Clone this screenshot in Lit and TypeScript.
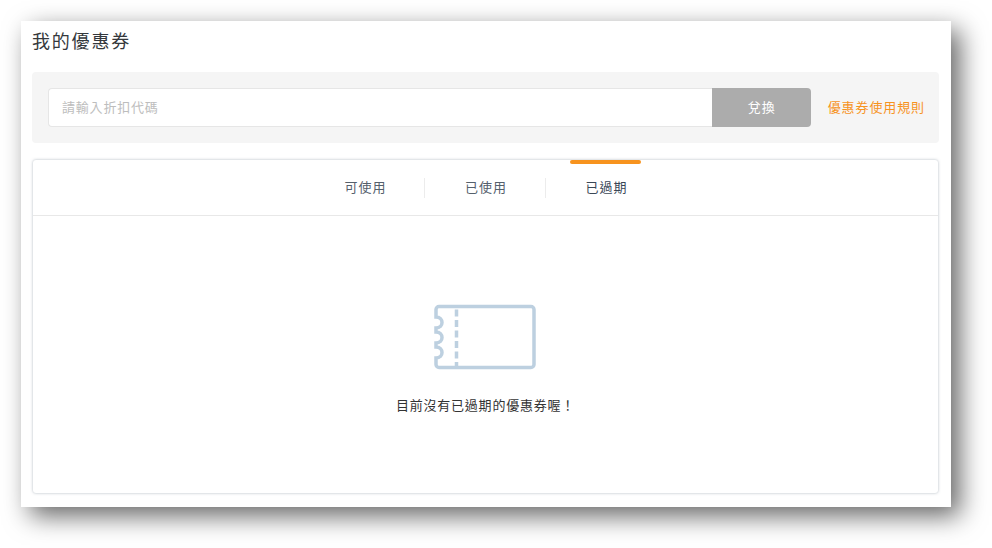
import { LitElement, css, html } from "lit";
import { customElement, state } from "lit/decorators.js";

@customElement("app-root")
export class AppRoot extends LitElement {
  static styles = css`
    :host {
      display: block;
      width: 992px;
      height: 548px;
      padding: 21px 41px 41px 21px;
      box-sizing: border-box;
      background: #fff;
      overflow: hidden;
      font-family: "Noto Sans CJK TC", "Noto Sans", sans-serif;
    }
    .window {
      height: 486px;
      box-sizing: border-box;
      padding: 0 13px 14px 12px;
      background: #fff;
      display: flex;
      flex-direction: column;
      box-shadow: 9px 9px 24px rgba(0, 0, 0, 0.6);
    }
    h1 {
      margin: 0 0 0 -1px;
      height: 51px;
      line-height: 38px;
      font-size: 18px;
      font-weight: 400;
      letter-spacing: 1.8px;
      color: #34383c;
    }
    .redeem {
      height: 71px;
      margin: 0 -1px;
      box-sizing: border-box;
      padding: 16px 14px 16px 16px;
      display: flex;
      align-items: stretch;
      background: #f5f5f5;
      border-radius: 4px;
    }
    .field {
      flex: 1;
      min-width: 0;
      box-sizing: border-box;
      padding: 0 13px 2px;
      border: 1px solid #e6e6e6;
      border-right: none;
      border-radius: 4px 0 0 4px;
      background: #fff;
      font-family: inherit;
      font-size: 13px;
      letter-spacing: 0.8px;
      outline: none;
    }
    .field::placeholder {
      color: #bdbdbd;
    }
    .submit {
      width: 99px;
      padding: 0 0 2px 1px;
      border: none;
      border-radius: 0 4px 4px 0;
      background: #acacac;
      color: #fff;
      font-family: inherit;
      font-size: 13px;
      letter-spacing: 1px;
    }
    .rules {
      margin: 0 0 2px 17px;
      align-self: center;
      font-size: 13px;
      letter-spacing: 0.9px;
      color: #f7931e;
      text-decoration: none;
      white-space: nowrap;
    }
    .card {
      margin-top: 17px;
      flex: 1;
      display: flex;
      flex-direction: column;
      background: #fff;
      border-radius: 3px;
      box-shadow: 0 0 3px rgba(110, 125, 140, 0.55);
    }
    .tabs {
      height: 56px;
      flex: none;
      box-sizing: border-box;
      display: flex;
      justify-content: center;
      align-items: center;
      border-bottom: 1px solid #e8e8e8;
    }
    .tab {
      position: relative;
      width: 121px;
      height: 20px;
      line-height: 18px;
      text-align: center;
      font-size: 13px;
      letter-spacing: 1px;
      color: #55606c;
      border-right: 1px solid #ececec;
      box-sizing: border-box;
      cursor: pointer;
    }
    .tab:nth-child(1) {
      padding-left: 3px;
    }
    .tab:nth-child(2) {
      padding-left: 2px;
    }
    .tab:last-child {
      border-right: none;
    }
    .tab.active {
      color: #3a4756;
    }
    .tab.active::before {
      content: "";
      position: absolute;
      top: -18px;
      left: 24px;
      width: 71px;
      height: 4px;
      border-radius: 2px;
      background: #f7931e;
    }
    .empty {
      flex: 1;
      display: flex;
      flex-direction: column;
      align-items: center;
      padding-top: 88px;
      color: #333;
    }
    .empty svg {
      display: block;
      width: 102px;
      height: 66px;
      margin-left: -1px;
    }
    .empty p {
      margin: 25px 0 0;
      line-height: 20px;
      font-size: 13px;
      letter-spacing: 0.75px;
      color: #333;
    }
  `;

  @state() private active = 2;

  private tabs = ["可使用", "已使用", "已過期"];

  render() {
    return html`
      <div class="window">
        <h1>我的優惠券</h1>
        <div class="redeem">
          <input class="field" type="text" placeholder="請輸入折扣代碼" />
          <button class="submit">兌換</button>
          <a class="rules" href="#">優惠券使用規則</a>
        </div>
        <div class="card">
          <div class="tabs">
            ${this.tabs.map(
              (t, i) => html`<div
                class="tab ${i === this.active ? "active" : ""}"
                @click=${() => (this.active = i)}
              >${t}</div>`
            )}
          </div>
          <div class="empty">
            <svg viewBox="0 0 102 66" fill="none" stroke="#bdd0e0" stroke-width="3.500">
              <path d="M5 2.500H97a3 3 0 0 1 3 3V60.500a3 3 0 0 1-3 3H5a3 3 0 0 1-3-3V54c4 0 6-2.500 6-5.500s-2-5.500-6-5.500V39c4 0 6-2.500 6-5.500S6 28 2 28V24c4 0 6-2.500 6-5.500S6 13 2 13V5.500a3 3 0 0 1 3-3Z" />
              <path d="M22.500 2.500V63.500" stroke-dasharray="7 3.500" stroke-dashoffset="-3" />
            </svg>
            <p>目前沒有${this.tabs[this.active]}的優惠券喔！</p>
          </div>
        </div>
      </div>
    `;
  }
}
